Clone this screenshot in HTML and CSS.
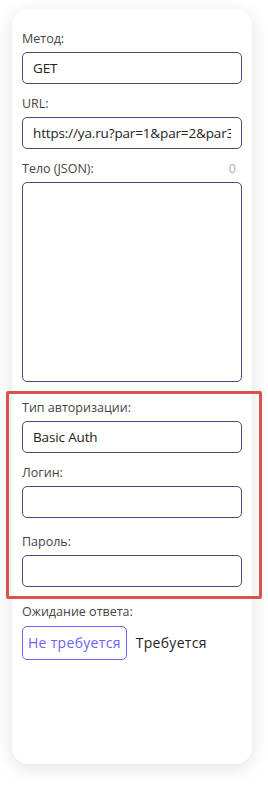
FILE: index.html
```html
<!DOCTYPE html>
<html lang="ru">
<head>
    <meta charset="UTF-8">
    <meta name="viewport" content="width=device-width, initial-scale=1.0">
    <title>Запрос</title>
    <link rel="stylesheet" href="styles.css">
</head>
<body>

    <div class="card">
        <!-- Метод -->
        <div class="field">
            <label class="field-label">Метод:</label>
            <input class="field-input" type="text" value="GET">
        </div>

        <!-- URL -->
        <div class="field">
            <label class="field-label">URL:</label>
            <input class="field-input" type="text" value="https://ya.ru?par=1&par=2&par3=3">
        </div>

        <!-- Тело запроса -->
        <div class="field">
            <div class="label-row">
                <label class="field-label">Тело (JSON):</label>
                <span class="counter">0</span>
            </div>
            <textarea class="field-input body-input"></textarea>
        </div>

        <!-- Авторизация -->
        <div class="auth-block">
            <div class="field">
                <label class="field-label">Тип авторизации:</label>
                <input class="field-input" type="text" value="Basic Auth">
            </div>
            <div class="field">
                <label class="field-label">Логин:</label>
                <input class="field-input" type="text">
            </div>
            <div class="field">
                <label class="field-label">Пароль:</label>
                <input class="field-input" type="password">
            </div>
        </div>

        <!-- Ожидание ответа -->
        <div class="field">
            <label class="field-label">Ожидание ответа:</label>
            <div class="toggle">
                <span class="toggle-item active">Не требуется</span>
                <span class="toggle-item">Требуется</span>
            </div>
        </div>
    </div>

</body>
</html>
```

FILE: styles.css
```css
:root {
    --text-color: #444;
    --input-border: #4a4a7c;
    --accent: #6d62ff;
    --mark: #d9534a;
}

body {
    margin: 0;
    padding: 9px 16px 21px 12px;
    font-family: "Open Sans", Arial, sans-serif;
    color: var(--text-color);
    background: #ffffff;
}

.card {
    background: #ffffff;
    border-radius: 16px;
    box-shadow: 0 4px 18px rgba(0, 0, 0, 0.12);
    padding: 22px 10px 0 10px;
    height: 755px;
    box-sizing: border-box;
}

.field {
    display: flex;
    flex-direction: column;
    margin-bottom: 12px;
}

.label-row {
    display: flex;
    justify-content: space-between;
    align-items: center;
    padding-right: 6px;
}

.field-label {
    font-size: 12.5px;
    line-height: 16px;
    margin-bottom: 5px;
    color: var(--text-color);
}

.counter {
    font-size: 12.5px;
    line-height: 16px;
    margin-bottom: 5px;
    color: #aaa;
}

.field-input {
    height: 32px;
    box-sizing: border-box;
    border: 1px solid var(--input-border);
    border-radius: 5px;
    padding: 0 10px;
    font-family: "Open Sans", Arial, sans-serif;
    font-size: 13.5px;
    letter-spacing: -0.15px;
    color: #222;
    background: #ffffff;
    width: 100%;
    outline: none;
}

.body-input {
    height: 200px;
    resize: none;
    padding: 8px 10px;
}

/* Красная рамка вокруг блока авторизации */
.auth-block {
    position: relative;
    padding: 6px 0 12px;
    margin-bottom: 5px;
}

.auth-block .field {
    margin-bottom: 0;
}

.auth-block .field + .field {
    margin-top: 16px;
}

.auth-block .field:nth-child(2) {
    margin-top: 12px;
}

.auth-block::after {
    content: "";
    position: absolute;
    top: -3px;
    bottom: 0;
    left: -16px;
    right: -20px;
    border: 3px solid var(--mark);
    border-radius: 2px;
    pointer-events: none;
}

.toggle {
    display: flex;
    align-items: center;
    gap: 9px;
    margin-top: 1px;
}

.toggle-item {
    font-size: 14px;
    letter-spacing: 0.3px;
    color: #222;
    padding: 8px 0;
    line-height: 16px;
}

.toggle-item.active {
    color: var(--accent);
    border: 1px solid var(--accent);
    border-radius: 5px;
    padding: 8px 5px;
}
```
